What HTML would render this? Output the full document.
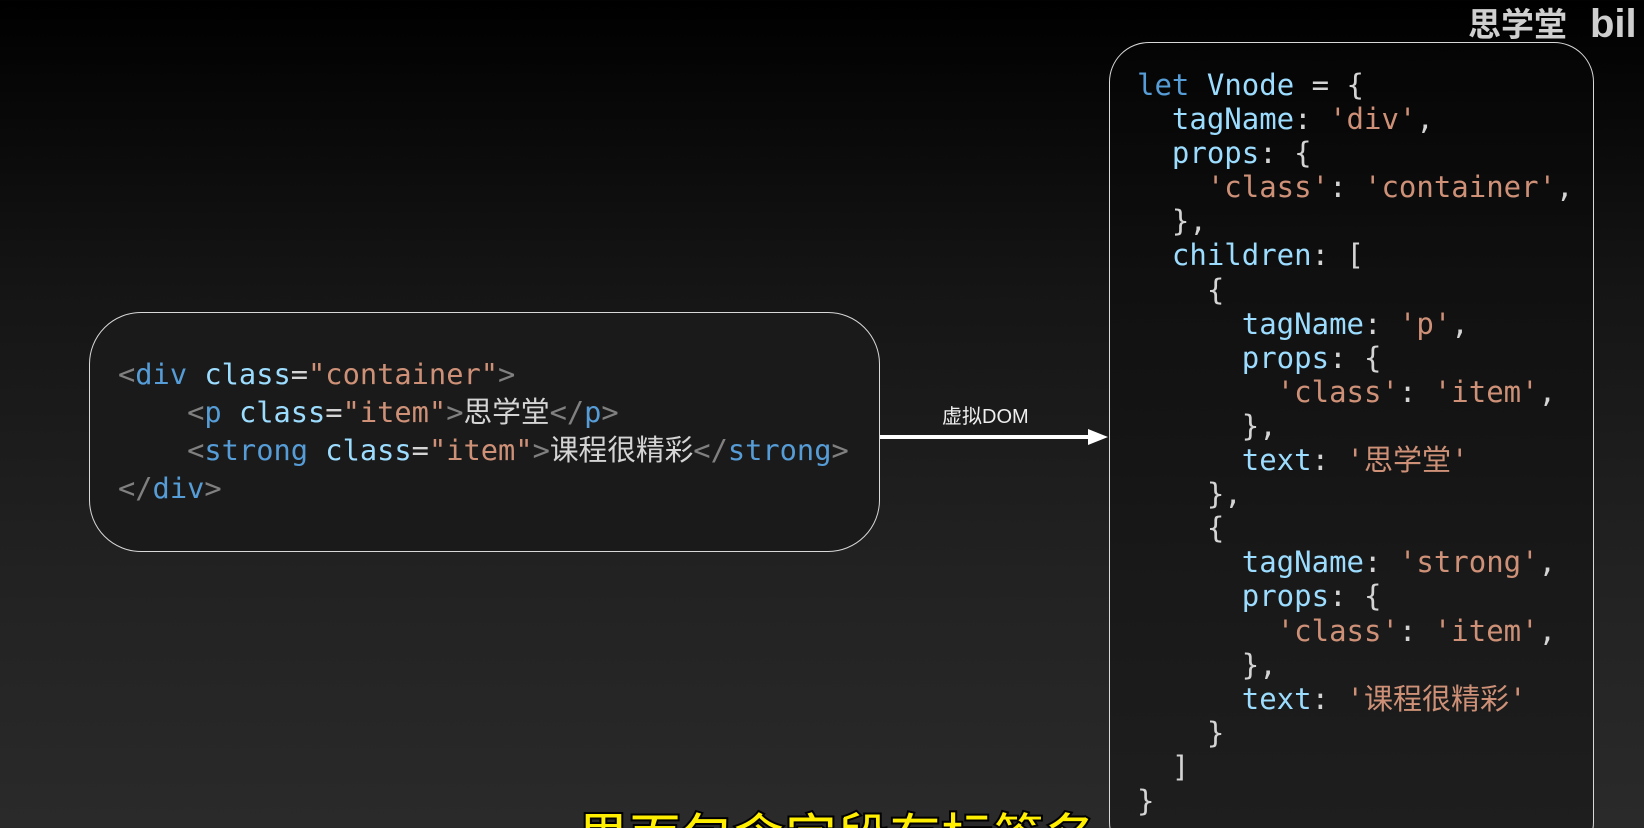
<!DOCTYPE html>
<html><head><meta charset="utf-8"><style>
html,body{margin:0;padding:0;width:1644px;height:828px;overflow:hidden}
body{position:relative;background:linear-gradient(to bottom,#000 0%,#151515 35%,#222 70%,#2a2a2a 100%);font-family:"DejaVu Sans Mono","Liberation Mono","Noto Sans CJK SC",monospace}
.box{position:absolute;border:1.5px solid #d8d8d8;box-sizing:border-box}
.code{position:absolute;margin:0}
.code div{white-space:pre;overflow:visible}
.b{color:#569cd6}.a{color:#9cdcfe}.s{color:#ce9178}.g{color:#808080}.w{color:#d4d4d4}
.cj{font-family:"Noto Sans CJK SC",sans-serif;line-height:0}
.L div{height:38px;line-height:38px}
.R div{height:34.1px;line-height:34px}
</style></head><body>
<div class="box" style="left:89px;top:312px;width:791px;height:240px;border-radius:52px;background:#1a1a1a"></div>
<div class="code L" style="left:118px;top:355px;font-size:28.7px;color:#d4d4d4"><div><span class="g">&lt;</span><span class="b">div</span> <span class="a">class</span>=<span class="s">"container"</span><span class="g">&gt;</span></div><div>    <span class="g">&lt;</span><span class="b">p</span> <span class="a">class</span>=<span class="s">"item"</span><span class="g">&gt;</span><span class="cj">思学堂</span><span class="g">&lt;/</span><span class="b">p</span><span class="g">&gt;</span></div><div>    <span class="g">&lt;</span><span class="b">strong</span> <span class="a">class</span>=<span class="s">"item"</span><span class="g">&gt;</span><span class="cj">课程很精彩</span><span class="g">&lt;/</span><span class="b">strong</span><span class="g">&gt;</span></div><div><span class="g">&lt;/</span><span class="b">div</span><span class="g">&gt;</span></div></div>

<div style="position:absolute;left:880px;top:435px;width:210px;height:4px;background:#fff"></div>
<div style="position:absolute;left:1088px;top:429px;width:0;height:0;border-left:20px solid #fff;border-top:8px solid transparent;border-bottom:8px solid transparent"></div>
<div style="position:absolute;left:942px;top:400px;font-family:'Liberation Sans','Noto Sans CJK SC',sans-serif;font-size:20px;color:#eee">虚拟DOM</div>

<div class="box" style="left:1109px;top:42px;width:485px;height:820px;border-radius:40px;background:rgba(10,10,10,0.35)"></div>
<div class="code R" style="left:1137px;top:68px;font-size:29px;color:#d4d4d4"><div><span class="b">let</span> <span class="a">Vnode</span> = {</div><div>  <span class="a">tagName</span>: <span class="s">'div'</span>,</div><div>  <span class="a">props</span>: {</div><div>    <span class="s">'class'</span>: <span class="s">'container'</span>,</div><div>  },</div><div>  <span class="a">children</span>: [</div><div>    {</div><div>      <span class="a">tagName</span>: <span class="s">'p'</span>,</div><div>      <span class="a">props</span>: {</div><div>        <span class="s">'class'</span>: <span class="s">'item'</span>,</div><div>      },</div><div>      <span class="a">text</span>: <span class="s">'<span class="cj">思学堂</span>'</span></div><div>    },</div><div>    {</div><div>      <span class="a">tagName</span>: <span class="s">'strong'</span>,</div><div>      <span class="a">props</span>: {</div><div>        <span class="s">'class'</span>: <span class="s">'item'</span>,</div><div>      },</div><div>      <span class="a">text</span>: <span class="s">'<span class="cj">课程很精彩</span>'</span></div><div>    }</div><div>  ]</div><div>}</div></div>

<div style="position:absolute;left:1468px;top:-2px;font-family:'Noto Sans CJK SC',sans-serif;font-size:33px;font-weight:bold;color:#cfcfcf">思学堂</div>
<div style="position:absolute;left:1590px;top:2px;font-family:'Liberation Sans',sans-serif;font-size:40px;font-weight:bold;color:#cfcfcf">bil</div>

<div style="position:absolute;left:577px;top:804px;font-family:'Noto Sans CJK SC',sans-serif;font-size:52px;font-weight:bold;color:#ffee00;-webkit-text-stroke:2px #000;white-space:nowrap;line-height:60px">里面包含字段有标签名</div>
</body></html>
